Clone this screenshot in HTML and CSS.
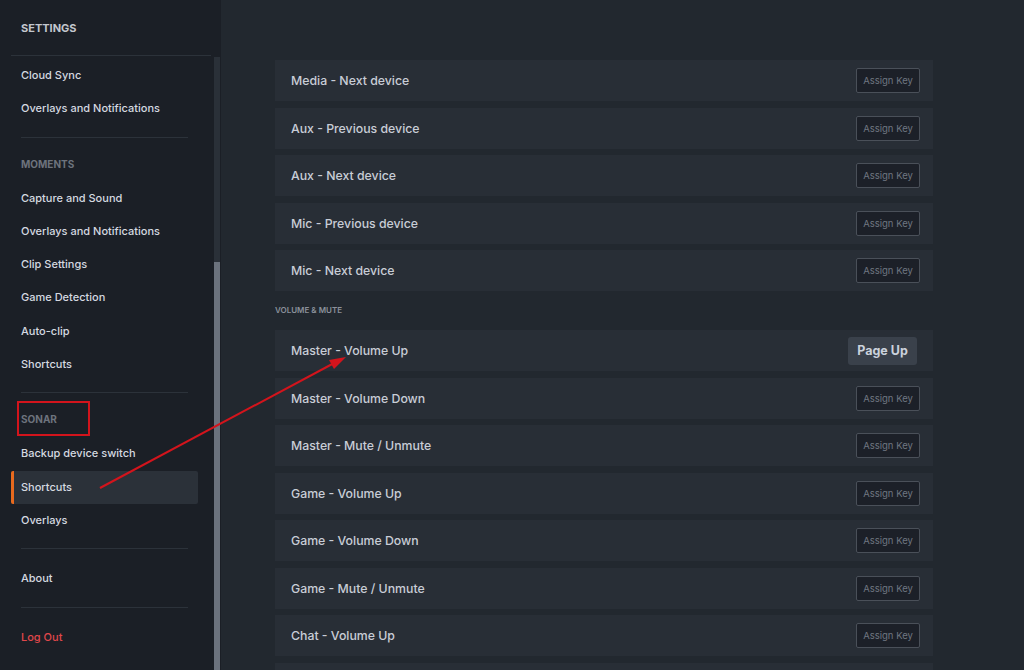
FILE: index.html
```html
<!DOCTYPE html>
<html lang="en">
<head>
  <meta charset="UTF-8">
  <title>Settings - Shortcuts</title>
  <link rel="stylesheet" href="styles.css">
</head>
<body>
  <div class="app">
    <aside class="sidebar">
      <nav class="nav">
        <div class="nav-title">SETTINGS</div>
        <hr class="nav-line wide">
        <a class="nav-item first">Cloud Sync</a>
        <a class="nav-item">Overlays and Notifications</a>
        <hr class="nav-line">
        <div class="nav-head">MOMENTS</div>
        <a class="nav-item">Capture and Sound</a>
        <a class="nav-item">Overlays and Notifications</a>
        <a class="nav-item">Clip Settings</a>
        <a class="nav-item">Game Detection</a>
        <a class="nav-item">Auto-clip</a>
        <a class="nav-item">Shortcuts</a>
        <hr class="nav-line">
        <div class="nav-head">SONAR</div>
        <a class="nav-item">Backup device switch</a>
        <a class="nav-item active">Shortcuts</a>
        <a class="nav-item">Overlays</a>
        <hr class="nav-line">
        <a class="nav-item after-line">About</a>
        <hr class="nav-line">
        <a class="nav-item after-line logout">Log Out</a>
      </nav>
      <div class="scroll-track">
        <div class="scroll-thumb"></div>
      </div>
    </aside>

    <main class="main">
      <div class="list">
        <div class="row"><span>Media - Next device</span><button class="assign">Assign Key</button></div>
        <div class="row"><span>Aux - Previous device</span><button class="assign">Assign Key</button></div>
        <div class="row"><span>Aux - Next device</span><button class="assign">Assign Key</button></div>
        <div class="row"><span>Mic - Previous device</span><button class="assign">Assign Key</button></div>
        <div class="row"><span>Mic - Next device</span><button class="assign">Assign Key</button></div>
      </div>

      <div class="section-label">VOLUME &amp; MUTE</div>

      <div class="list">
        <div class="row"><span>Master - Volume Up</span><button class="key">Page Up</button></div>
        <div class="row"><span>Master - Volume Down</span><button class="assign">Assign Key</button></div>
        <div class="row"><span>Master - Mute / Unmute</span><button class="assign">Assign Key</button></div>
        <div class="row"><span>Game - Volume Up</span><button class="assign">Assign Key</button></div>
        <div class="row"><span>Game - Volume Down</span><button class="assign">Assign Key</button></div>
        <div class="row"><span>Game - Mute / Unmute</span><button class="assign">Assign Key</button></div>
        <div class="row"><span>Chat - Volume Up</span><button class="assign">Assign Key</button></div>
        <div class="row"></div>
      </div>
    </main>
  </div>

  <!-- 注釈: 赤い枠と矢印 -->
  <svg class="markup" width="1024" height="670" viewBox="0 0 1024 670">
    <rect x="18" y="402" width="71" height="33" fill="none" stroke="#d3141c" stroke-width="2"/>
    <line x1="100" y1="488" x2="336" y2="362" stroke="#d3141c" stroke-width="2"/>
    <polygon points="346,357 329,360 334,369" fill="#d3141c"/>
  </svg>
</body>
</html>
```

FILE: styles.css
```css
body {
  margin: 0;
  padding: 0;
  width: 1024px;
  height: 670px;
  overflow: hidden;
  background-color: #22282f;
  font-family: Inter, 'Noto Sans', sans-serif;
  color: #c9ced6;
}

.app {
  display: flex;
  height: 670px;
}

/* サイドバー */
.sidebar {
  width: 221px;
  flex-shrink: 0;
  display: flex;
  background-color: #1b1f26;
}

.nav {
  width: 213px;
  padding: 0 0 0 11px;
  box-sizing: border-box;
  display: flex;
  flex-direction: column;
}

.nav-title {
  height: 55px;
  padding-left: 10px;
  line-height: 57px;
  font-size: 11px;
  font-weight: 700;
  color: #c3c7ce;
}

.nav-line {
  flex-shrink: 0;
  height: 0;
  margin: 11px 25px 0 10px;
  border: none;
  border-top: 1px solid #2c323a;
}

.nav-line.wide {
  margin: 0 2px 0 0;
}

.nav-head {
  flex-shrink: 0;
  height: 44px;
  padding: 20px 0 0 10px;
  box-sizing: border-box;
  line-height: 12px;
  font-size: 10px;
  font-weight: 700;
  color: #6d737d;
}

.nav-item {
  display: block;
  flex-shrink: 0;
  height: 33.3px;
  line-height: 33px;
  padding-left: 10px;
  margin-right: 15px;
  font-size: 11px;
  font-weight: 500;
  color: #d5d9e0;
  box-sizing: border-box;
}

.nav-item.first {
  margin-top: 3px;
}

.nav-item.active {
  background-color: #2b3139;
  border-left: 3px solid #e86a1e;
  padding-left: 7px;
  border-radius: 2px;
}

.nav-item.after-line {
  margin-top: 13px;
}

.nav-item.logout {
  color: #e0474b;
}

.scroll-track {
  width: 6px;
  margin: 57px 1px 0 1px;
  background-color: #2a3038;
  display: flex;
  flex-direction: column;
}

.scroll-thumb {
  margin-top: 205px;
  flex: 1;
  background-color: #6b727d;
}

/* メイン */
.main {
  flex: 1;
  padding: 60px 91px 0 54px;
  overflow: hidden;
}

.list {
  display: flex;
  flex-direction: column;
  gap: 6.5px;
}

.row {
  flex-shrink: 0;
  height: 41px;
  display: flex;
  align-items: center;
  justify-content: space-between;
  padding: 0 13px 0 16px;
  background-color: #282e36;
  font-size: 12.3px;
  font-weight: 500;
  color: #c8cdd6;
}

.section-label {
  height: 39px;
  line-height: 39px;
  font-size: 8px;
  font-weight: 600;
  color: #8b919b;
}

.assign {
  width: 64px;
  height: 25px;
  padding: 0;
  border: 1px solid #4a5059;
  border-radius: 2px;
  background-color: #1c2028;
  font-family: Inter, 'Noto Sans', sans-serif;
  font-size: 9.5px;
  color: #6f7681;
}

.key {
  width: 69px;
  height: 28px;
  margin-right: 3px;
  padding: 0;
  border: none;
  border-radius: 3px;
  background-color: #3a414b;
  font-family: Inter, 'Noto Sans', sans-serif;
  font-size: 12.5px;
  font-weight: 700;
  color: #cbd2dc;
}

.markup {
  position: absolute;
  top: 0;
  left: 0;
  pointer-events: none;
}
```
